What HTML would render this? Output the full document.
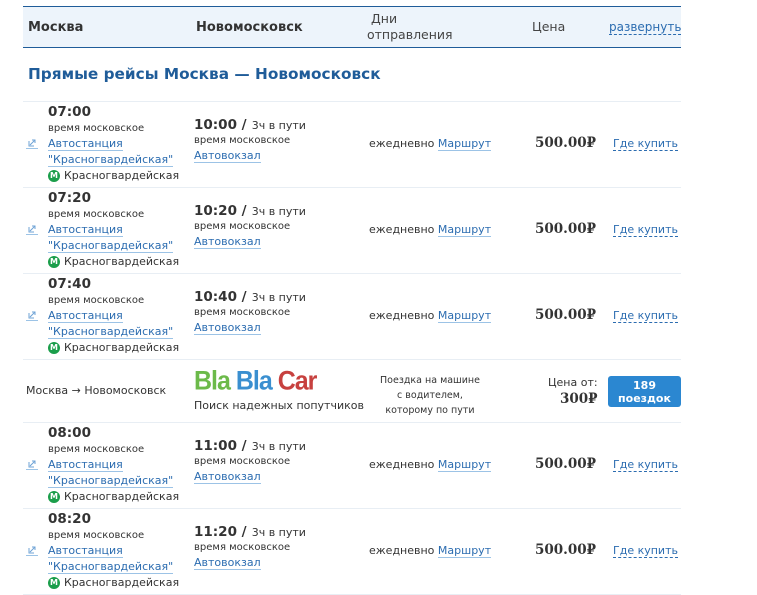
<!DOCTYPE html>
<html><head><meta charset="utf-8"><style>
*{margin:0;padding:0;box-sizing:border-box}
body{width:757px;height:583px;background:#fff;font-family:"DejaVu Sans","Liberation Sans",sans-serif;color:#333;position:relative;overflow:hidden}
.a{position:absolute;white-space:nowrap;line-height:1}
.hd{position:absolute;left:23px;top:6px;width:658px;height:42px;background:#edf4fb;border-top:1px solid #1f5c99;border-bottom:1px solid #1f5c99}
.hb{font-weight:bold;font-size:13px;color:#333}
.hn{font-size:12.5px;color:#444}
.ln{color:#2b6cb0;border-bottom:1px solid #9cc3e6}
.dl{color:#2b6cb0;border-bottom:1px dashed #2b6cb0}
.sep{position:absolute;left:23px;width:658px;height:1px;background:#e8eef4}
.t{font-size:13.5px;font-weight:bold;color:#333}
.s{font-size:10px;color:#333}
.m{font-size:11px}
.p{font-family:"DejaVu Serif","Liberation Serif",serif;font-weight:bold;font-size:13.5px;color:#333}
.mb{display:inline-block;width:12px;height:12px;border-radius:6px;background:#1b9e4b;color:#fff;font-size:8px;font-weight:bold;text-align:center;line-height:12px;vertical-align:middle;margin-right:4px}
</style></head><body>
<div class="hd"></div>
<div class="a hb" style="left:28px;top:21px">Москва</div>
<div class="a hb" style="left:196px;top:21px">Новомосковск</div>
<div class="a hn" style="left:371px;top:13px">Дни</div>
<div class="a hn" style="left:367px;top:29px">отправления</div>
<div class="a hn" style="left:532px;top:21px">Цена</div>
<div class="a hn" style="left:609px;top:21px;font-size:12px"><span class="dl">развернуть</span></div>
<div class="a" style="left:28px;top:67px;font-size:15.3px;font-weight:bold;color:#1f5c99">Прямые рейсы Москва — Новомосковск</div>
<div class="sep" style="top:101px"></div>

<div id="rows"></div>
<script>
var rows=[[101,"07:00","10:00"],[187,"07:20","10:20"],[273,"07:40","10:40"],[422,"08:00","11:00"],[508,"08:20","11:20"]];
var h="";
rows.forEach(function(r){var T=r[0];
h+='<div class="a t" style="left:48px;top:'+(T+5)+'px">'+r[1]+'</div>'+
'<div class="a s" style="left:48px;top:'+(T+23)+'px">время московское</div>'+
'<svg class="a" style="left:26px;top:'+(T+38)+'px" width="12" height="10"><path d="M4 6 L9 1 M6 1 H9 V4 M3 2 V7 H8" stroke="#6fa3d6" fill="none" stroke-width="1"/><line x1="0" y1="9.5" x2="12" y2="9.5" stroke="#9cc3e6"/></svg>'+
'<div class="a m" style="left:48px;top:'+(T+37)+'px"><span class="ln">Автостанция</span></div>'+
'<div class="a m" style="left:48px;top:'+(T+53)+'px"><span class="ln">"Красногвардейская"</span></div>'+
'<div class="a m" style="left:48px;top:'+(T+69)+'px"><span class="mb">M</span>Красногвардейская</div>'+
'<div class="a" style="left:194px;top:'+(T+15)+'px"><span class="t">'+r[2]+' /</span> <span class="s" style="font-size:11px">3ч в пути</span></div>'+
'<div class="a s" style="left:194px;top:'+(T+35)+'px">время московское</div>'+
'<div class="a m" style="left:194px;top:'+(T+49)+'px"><span class="ln">Автовокзал</span></div>'+
'<div class="a m" style="left:369px;top:'+(T+37)+'px">ежедневно <span class="ln">Маршрут</span></div>'+
'<div class="a p" style="left:535px;top:'+(T+36)+'px">500.00₽</div>'+
'<div class="a m" style="left:613px;top:'+(T+37)+'px"><span class="dl">Где купить</span></div>'+
'<div class="sep" style="top:'+(T+86)+'px"></div>';});
document.getElementById("rows").innerHTML=h;
</script>

<div class="a m" style="left:26px;top:385px">Москва → Новомосковск</div>
<div class="a" style="left:194px;top:368px;font-size:25px;font-weight:bold;letter-spacing:-1px;font-family:'Liberation Sans',sans-serif;transform:scaleY(1.08);transform-origin:top left"><span style="color:#6cba4a">Bla</span> <span style="color:#3a8fd0">Bla</span> <span style="color:#c7413f">Car</span></div>
<div class="a m" style="left:194px;top:400px">Поиск надежных попутчиков</div>
<div class="a" style="left:372px;top:373px;width:116px;text-align:center;line-height:15px;white-space:normal;font-size:9.5px">Поездка на машине<br>с водителем,<br>которому по пути</div>
<div class="a m" style="left:548px;top:377px">Цена от:</div>
<div class="a p" style="left:560px;top:393px">300₽</div>
<div class="a" style="left:608px;top:376px;width:73px;height:31px;background:#2b87d1;border-radius:3px;color:#fff;font-size:11px;font-weight:bold;text-align:center;line-height:13px;padding-top:3px">189<br>поездок</div>
<div class="sep" style="top:422px"></div>
</body></html>
